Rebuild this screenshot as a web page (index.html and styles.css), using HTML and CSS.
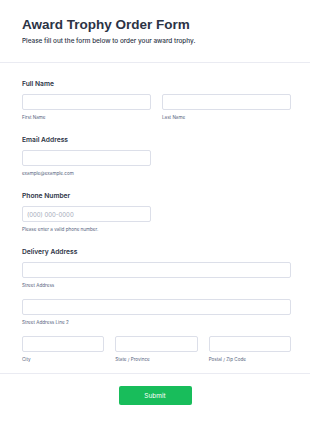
FILE: index.html
```html
<!DOCTYPE html>
<html lang="en">
<head>
    <meta charset="UTF-8">
    <meta name="viewport" content="width=device-width, initial-scale=1.0">
    <title>Award Trophy Order Form</title>
    <link rel="stylesheet" href="styles.css">
</head>
<body>
    <div class="form">
        <div class="header">
            <h1>Award Trophy Order Form</h1>
            <p>Please fill out the form below to order your award trophy.</p>
        </div>

        <div class="fields">
            <div class="field">
                <label>Full Name</label>
                <div class="row two">
                    <div class="sub">
                        <input type="text">
                        <span>First Name</span>
                    </div>
                    <div class="sub">
                        <input type="text">
                        <span>Last Name</span>
                    </div>
                </div>
            </div>

            <div class="field">
                <label>Email Address</label>
                <div class="sub half">
                    <input type="text">
                    <span>example@example.com</span>
                </div>
            </div>

            <div class="field">
                <label>Phone Number</label>
                <div class="sub half">
                    <input type="text" placeholder="(000) 000-0000">
                    <span>Please enter a valid phone number.</span>
                </div>
            </div>

            <div class="field">
                <label>Delivery Address</label>
                <div class="sub">
                    <input type="text">
                    <span>Street Address</span>
                </div>
                <div class="sub">
                    <input type="text">
                    <span>Street Address Line 2</span>
                </div>
                <div class="row three">
                    <div class="sub">
                        <input type="text">
                        <span>City</span>
                    </div>
                    <div class="sub">
                        <input type="text">
                        <span>State / Province</span>
                    </div>
                    <div class="sub">
                        <input type="text">
                        <span>Postal / Zip Code</span>
                    </div>
                </div>
            </div>
        </div>

        <div class="footer">
            <button>Submit</button>
        </div>
    </div>
</body>
</html>
```

FILE: styles.css
```css
* {
    margin: 0;
    padding: 0;
    box-sizing: border-box;
    font-family: 'Inter', 'Liberation Sans', sans-serif;
}

body {
    background: #fff;
    color: #2c3345;
}

.header {
    padding: 17px 22px 16px;
    border-bottom: 1px solid #eaebf2;
}

.header h1 {
    font-family: 'Liberation Sans', Arial, sans-serif;
    font-size: 13.5px;
    font-weight: 700;
    line-height: 16px;
    color: #2c3345;
    margin-bottom: 3px;
}

.header p {
    font-size: 6.4px;
    font-weight: 500;
    line-height: 10px;
    color: #2c3345;
}

.fields {
    padding: 16px 19px 10px 22px;
    border-bottom: 1px solid #eaebf2;
}

.field {
    display: flex;
    flex-direction: column;
    gap: 10px;
    margin-bottom: 14px;
}

.field:last-child {
    margin-bottom: 0;
}

.field label {
    display: block;
    font-size: 6.7px;
    font-weight: 600;
    line-height: 10px;
    color: #2c3345;
    margin-bottom: -5px;
}

.row {
    display: grid;
    gap: 11px;
}

.row.two {
    grid-template-columns: 1fr 1fr;
}

.row.three {
    grid-template-columns: 1fr 1fr 1fr;
}

.sub.half {
    width: 129px;
}

.sub input {
    display: block;
    width: 100%;
    height: 16px;
    border: 1px solid #dcdfe9;
    border-radius: 2px;
    padding: 0 4px;
    font-size: 6px;
    outline: none;
}

.sub input::placeholder {
    color: #a3a9b8;
}

.sub span {
    display: block;
    font-size: 4.6px;
    line-height: 7px;
    color: #57647e;
    margin-top: 4px;
}

.footer {
    display: flex;
    justify-content: center;
    padding: 12px 0;
}

.footer button {
    width: 73px;
    height: 19px;
    border: none;
    border-radius: 2px;
    background: #18bd5b;
    color: #fff;
    font-size: 6.5px;
    cursor: pointer;
}
```
